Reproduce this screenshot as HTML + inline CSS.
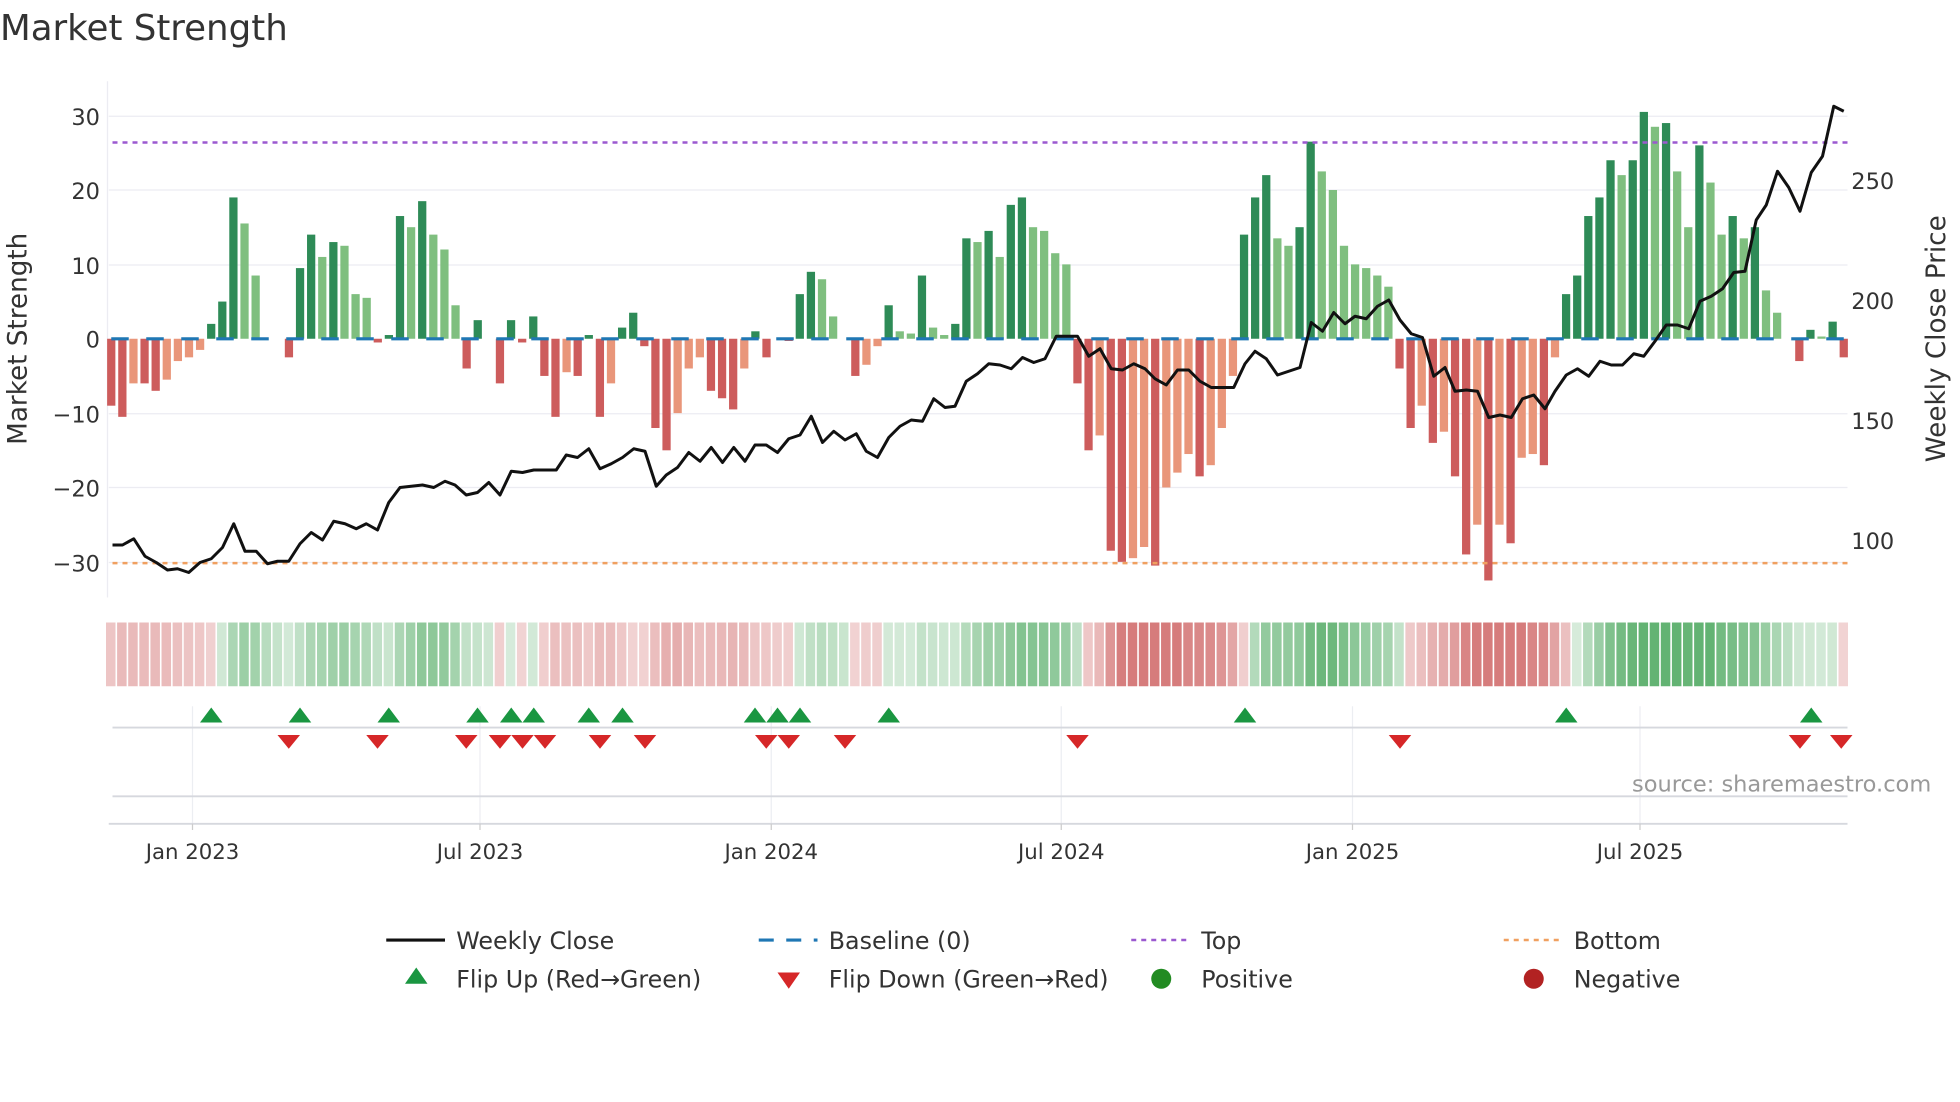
<!DOCTYPE html>
<html><head><meta charset="utf-8"><style>
html,body{margin:0;padding:0;background:#fff;width:1960px;height:1102px;overflow:hidden}
svg{display:block}
text{font-family:"DejaVu Sans","Liberation Sans",sans-serif;fill:#333}
</style></head><body>
<svg id="s" width="1960" height="1102" viewBox="0 0 1568 881.6" preserveAspectRatio="none" xmlns="http://www.w3.org/2000/svg">
<rect width="1568" height="882" fill="#fff"/>
<text x="0" y="32" font-size="28.5">Market Strength</text>
<g stroke="#ececf2" stroke-width="1">
<line x1="87" x2="1478" y1="93" y2="93"/><line x1="87" x2="1478" y1="152" y2="152"/><line x1="87" x2="1478" y1="212" y2="212"/>
<line x1="87" x2="1478" y1="331" y2="331"/><line x1="87" x2="1478" y1="390" y2="390"/><line x1="87" x2="1478" y1="450" y2="450"/>
<line x1="86" x2="86" y1="65" y2="478"/>
</g>
<g font-size="18" text-anchor="end">
<text x="80" y="100">30</text><text x="80" y="159">20</text><text x="80" y="219">10</text><text x="80" y="278">0</text>
<text x="80" y="338">−10</text><text x="80" y="397">−20</text><text x="80" y="457">−30</text>
</g>
<g font-size="18">
<text x="1481" y="151">250</text><text x="1481" y="247">200</text><text x="1481" y="343">150</text><text x="1481" y="439">100</text>
</g>
<text transform="translate(21,271) rotate(-90)" font-size="21" text-anchor="middle">Market Strength</text>
<text transform="translate(1556,271) rotate(-90)" font-size="21" text-anchor="middle">Weekly Close Price</text>
<g id="bars"></g>
<line x1="89" x2="1478" y1="271" y2="271" stroke="#1f77b4" stroke-width="2.5" stroke-dasharray="14,14"/>
<line x1="90" x2="1478" y1="114" y2="114" stroke="#9b59d0" stroke-width="2" stroke-dasharray="4,4"/>
<line x1="90" x2="1478" y1="450.5" y2="450.5" stroke="#f0a060" stroke-width="2" stroke-dasharray="4,4"/>
<polyline id="price" fill="none" stroke="#111" stroke-width="2.4" stroke-linejoin="round"/>
<g id="heat"></g>
<g stroke="#eceef2" stroke-width="1">
<line x1="154" x2="154" y1="565" y2="659"/><line x1="384" x2="384" y1="565" y2="659"/><line x1="617" x2="617" y1="565" y2="659"/>
<line x1="849" x2="849" y1="565" y2="659"/><line x1="1082" x2="1082" y1="565" y2="659"/><line x1="1312" x2="1312" y1="565" y2="659"/>
</g>
<line x1="90" x2="1478" y1="582" y2="582" stroke="#d6d8de" stroke-width="1.5"/>
<line x1="90" x2="1478" y1="637" y2="637" stroke="#d6d8de" stroke-width="1.5"/>
<line x1="87" x2="1478" y1="659" y2="659" stroke="#d6d8de" stroke-width="1.5"/>
<g stroke="#ccc"><line x1="154" x2="154" y1="659" y2="664"/><line x1="384" x2="384" y1="659" y2="664"/><line x1="617" x2="617" y1="659" y2="664"/><line x1="849" x2="849" y1="659" y2="664"/><line x1="1082" x2="1082" y1="659" y2="664"/><line x1="1312" x2="1312" y1="659" y2="664"/></g>
<g id="marks"></g>
<text x="1545" y="633" font-size="18" text-anchor="end" style="fill:#999">source: sharemaestro.com</text>
<g font-size="17" text-anchor="middle">
<text x="154" y="687">Jan 2023</text><text x="384" y="687">Jul 2023</text><text x="617" y="687">Jan 2024</text>
<text x="849" y="687">Jul 2024</text><text x="1082" y="687">Jan 2025</text><text x="1312" y="687">Jul 2025</text>
</g>
<g font-size="19">
<line x1="309" x2="356" y1="752" y2="752" stroke="#111" stroke-width="2.5"/>
<text x="365" y="759">Weekly Close</text>
<line x1="607" x2="654" y1="752" y2="752" stroke="#1f77b4" stroke-width="2.5" stroke-dasharray="12,10"/>
<text x="663" y="759">Baseline (0)</text>
<line x1="905" x2="952" y1="752" y2="752" stroke="#9b59d0" stroke-width="2" stroke-dasharray="4,4"/>
<text x="961" y="759">Top</text>
<line x1="1203" x2="1250" y1="752" y2="752" stroke="#f0a060" stroke-width="2" stroke-dasharray="4,4"/>
<text x="1259" y="759">Bottom</text>
<polygon points="333,774 324,787 342,787" fill="#1a9641"/>
<text x="365" y="790">Flip Up (Red→Green)</text>
<polygon points="622,778 640,778 631,791" fill="#d62728"/>
<text x="663" y="790">Flip Down (Green→Red)</text>
<circle cx="929" cy="783" r="8" fill="#228b22"/>
<text x="961" y="790">Positive</text>
<circle cx="1227" cy="783" r="8" fill="#b22222"/>
<text x="1259" y="790">Negative</text>
</g>
</svg>
<script>
var V="-9D -10.5D -6L -6D -7D -5.5L -3L -2.5L -1.5L 2D 5D 19D 15.5L 8.5L 0D 0D -2.5D 9.5D 14D 11L 13D 12.5L 6L 5.5L -0.5D 0.5D 16.5D 15L 18.5D 14L 12L 4.5L -4D 2.5D 0D -6D 2.5D -0.5D 3D -5D -10.5D -4.5L -5D 0.5D -10.5D -6L 1.5D 3.5D -1D -12D -15D -10L -4L -2.5L -7D -8D -9.5D -4L 1D -2.5D 0D -0.3D 6D 9D 8L 3L 0D -5D -3.5L -1L 4.5D 1L 0.7L 8.5D 1.5L 0.5L 2D 13.5D 13L 14.5D 11L 18D 19D 15L 14.5L 11.5L 10L -6D -15D -13L -28.5D -30D -29.5L -28L -30.5D -20L -18L -15.5L -18.5D -17L -12L -5L 14D 19D 22D 13.5L 12.5L 15D 26.5D 22.5L 20L 12.5L 10L 9.5L 8.5L 7L -4D -12D -9L -14D -12.5L -18.5D -29D -25L -32.5D -25L -27.5D -16L -15.5L -17D -2.5L 6D 8.5D 16.5D 19D 24D 22L 24D 30.5D 28.5L 29D 22.5L 15L 26D 21L 14L 16.5D 13.5L 15D 6.5L 3.5L 0D -3D 1.2D 0.3L 2.3D -2.5D".split(" ");
var ns="http://www.w3.org/2000/svg",b=document.getElementById("bars"),h=document.getElementById("heat");
function el(p,t,a){var e=document.createElementNS(ns,t);for(var k in a)e.setAttribute(k,a[k]);p.appendChild(e);return e}
var st=0,n=V.length,dx=(1475-89)/(n-1);
V.forEach(function(s,i){var d=s.slice(-1),v=parseFloat(s);var x=89+dx*i;
 if(v!==0){var c=v>0?(d=="D"?"#2e8b57":"#7fbf7f"):(d=="D"?"#cd5c5c":"#e9967a");
 var y=271-v*5.95;el(b,"rect",{x:x-3.3,y:Math.min(y,271),width:6.6,height:Math.abs(v*5.95),fill:c});}
 st=st*0.6+v*0.4;var a=Math.min(1,Math.abs(st)/22);
 var col=st>=0?"rgba(60,160,80,"+(0.2+0.6*a)+")":"rgba(200,80,80,"+(0.25+0.5*a)+")";
 el(h,"rect",{x:x-4.2,y:498,width:7.6,height:51,fill:col});
});
var P="90,436 98,436 107,431 116,445 125,450 134,456 142,455 151,458 160,450 169,447 178,438 187,419 196,441 205,441 214,451 222,449 231,449 240,435 249,426 258,432 267,417 276,419 285,423 293,419 302,424 311,402 320,390 329,389 338,388 347,390 356,385 364,388 373,396 382,394 391,386 400,396 409,377 418,378 427,376 436,376 445,376 453,364 462,366 471,359 480,375 489,371 498,366 507,359 516,361 525,389 533,380 542,374 551,362 560,369 569,358 578,370 587,358 596,369 604,356 613,356 622,362 631,351 640,348 649,333 658,354 667,345 676,352 685,347 693,361 702,366 711,350 720,341 729,336 738,337 747,319 756,326 764,325 773,305 782,299 791,291 800,292 809,295 818,286 827,290 836,287 845,269 853,269 862,269 871,285 880,279 889,295 898,296 907,291 916,295 924,303 933,308 942,296 951,296 960,305 969,310 978,310 987,310 996,291 1004,281 1013,287 1022,300 1031,297 1040,294 1049,258 1058,265 1067,250 1076,259 1084,253 1093,255 1102,245 1111,240 1120,256 1129,267 1138,270 1147,301 1156,294 1164,313 1173,312 1182,313 1191,334 1200,332 1209,334 1218,319 1227,316 1236,327 1244,313 1253,300 1262,295 1271,301 1280,289 1289,292 1298,292 1307,283 1315,285 1324,273 1333,260 1342,260 1351,263 1360,241 1369,237 1378,231 1387,218 1396,217 1405,176 1413,164 1422,137 1431,150 1440,169 1449,138 1458,125 1467,85 1475,89";
document.getElementById("price").setAttribute("points",P);
var m=document.getElementById("marks");
[169,240,311,382,409,427,471,498,604,622,640,711,996,1253,1449].forEach(function(x){el(m,"polygon",{points:x+",566 "+(x-9)+",578 "+(x+9)+",578",fill:"#1a9641"})});
[231,302,373,400,418,436,480,516,613,631,676,862,1120,1440,1473].forEach(function(x){el(m,"polygon",{points:(x-9)+",588 "+(x+9)+",588 "+x+",599",fill:"#d62728"})});
</script>
</body></html>
